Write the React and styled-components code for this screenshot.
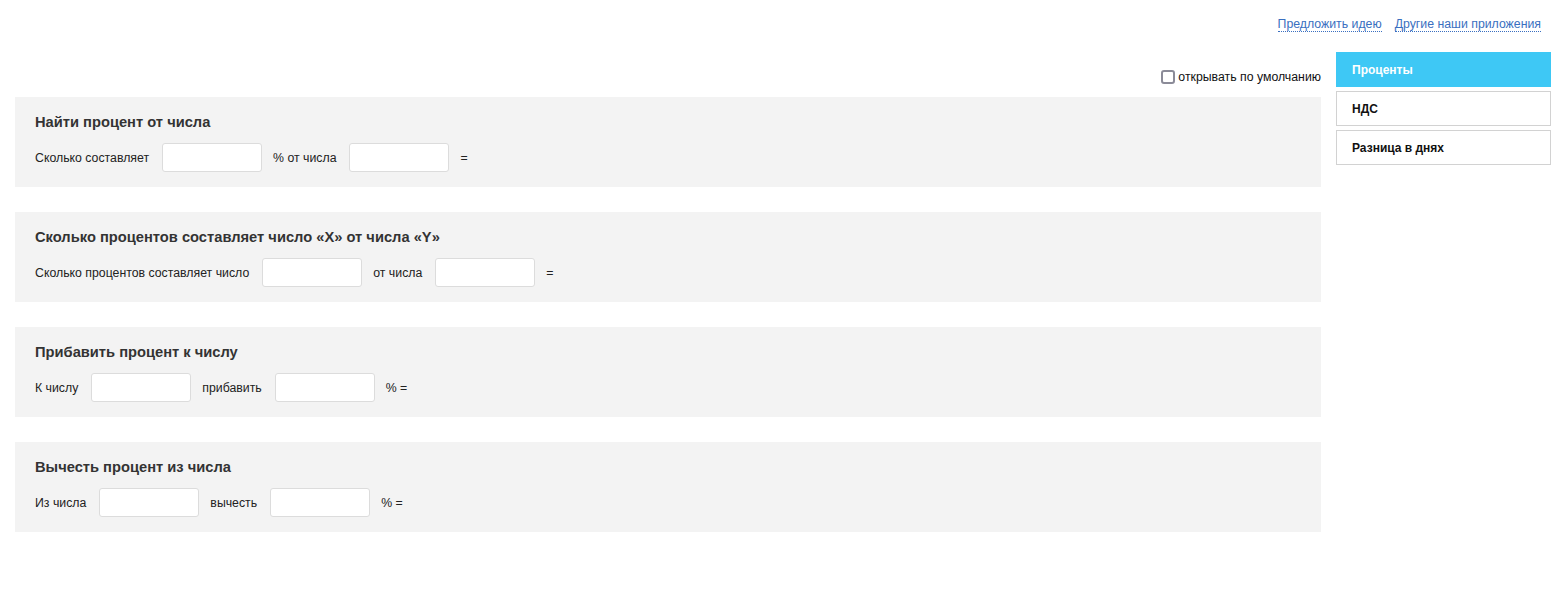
import React from "react";
import styled, { createGlobalStyle } from "styled-components";

const Global = createGlobalStyle`
  html, body { margin: 0; padding: 0; background: #fff; }
  body { font-family: "Liberation Sans", Arial, sans-serif; font-size: 12px; color: #222; }
  * { box-sizing: border-box; }
`;

const Page = styled.div`
  width: 1564px;
  padding: 0 13px 0 15px;
`;

const Header = styled.div`
  height: 52px;
  display: flex;
  justify-content: flex-end;
  align-items: flex-start;
  gap: 13px;
  padding: 17px 10px 0 0;
`;

const TopLink = styled.a`
  font-size: 12.3px;
  line-height: 14px;
  color: #3a6fc0;
  text-decoration: none;
  border-bottom: 1px dotted #3a6fc0;
  cursor: pointer;
`;

const Layout = styled.div`
  display: flex;
  align-items: flex-start;
`;

const Main = styled.div`
  flex: 1;
  display: flex;
  flex-direction: column;
`;

const DefaultRow = styled.label`
  height: 45px;
  padding-top: 5px;
  display: flex;
  justify-content: flex-end;
  align-items: center;
  font-size: 12.3px;
  color: #111;
`;

const Check = styled.input`
  appearance: none;
  width: 14px;
  height: 14px;
  margin: 0 3px 0 0;
  border: 2px solid #8b8b98;
  border-radius: 3px;
  background: #fff;
`;

const Panel = styled.section`
  background: #f3f3f3;
  height: 90px;
  padding: 17px 20px 15px;
  margin-bottom: 25px;
`;

const Title = styled.h2`
  margin: 0 0 13px;
  font-size: 14.7px;
  line-height: 16px;
  font-weight: bold;
  color: #333;
`;

const Row = styled.div`
  display: flex;
  align-items: center;
  height: 29px;
`;

const Label = styled.span`
  font-size: 12.3px;
  line-height: 14px;
  color: #222;
  margin-right: 13px;
`;

const Field = styled.input`
  width: 100px;
  height: 29px;
  border: 1px solid #dcdcdc;
  border-radius: 3px;
  background: #fff;
  margin: 0 11px 0 0;
  padding: 0 6px;
  font-size: 12px;
  outline: none;
`;

const Sidebar = styled.nav`
  width: 215px;
  margin-left: 15px;
  display: flex;
  flex-direction: column;
  gap: 4px;
`;

const NavItem = styled.div`
  height: 35px;
  display: flex;
  align-items: center;
  padding-left: 15px;
  font-size: 12px;
  font-weight: bold;
  color: ${(p) => (p.$active ? "#fff" : "#111")};
  background: ${(p) => (p.$active ? "#3ec8f5" : "#fff")};
  border: 1px solid ${(p) => (p.$active ? "#3ec8f5" : "#d2d2d2")};
  cursor: pointer;
`;

const calculators = [
  { title: "Найти процент от числа", parts: ["Сколько составляет", "% от числа", "="] },
  { title: "Сколько процентов составляет число «X» от числа «Y»", parts: ["Сколько процентов составляет число", "от числа", "="] },
  { title: "Прибавить процент к числу", parts: ["К числу", "прибавить", "% ="] },
  { title: "Вычесть процент из числа", parts: ["Из числа", "вычесть", "% ="] },
];

export default function App() {
  return (
    <>
      <Global />
      <Page>
        <Header>
          <TopLink>Предложить идею</TopLink>
          <TopLink>Другие наши приложения</TopLink>
        </Header>
        <Layout>
          <Main>
            <DefaultRow>
              <Check type="checkbox" />
              открывать по умолчанию
            </DefaultRow>
            {calculators.map((c) => (
              <Panel key={c.title}>
                <Title>{c.title}</Title>
                <Row>
                  <Label>{c.parts[0]}</Label>
                  <Field type="text" />
                  <Label>{c.parts[1]}</Label>
                  <Field type="text" />
                  <Label>{c.parts[2]}</Label>
                </Row>
              </Panel>
            ))}
          </Main>
          <Sidebar>
            <NavItem $active>Проценты</NavItem>
            <NavItem>НДС</NavItem>
            <NavItem>Разница в днях</NavItem>
          </Sidebar>
        </Layout>
      </Page>
    </>
  );
}
